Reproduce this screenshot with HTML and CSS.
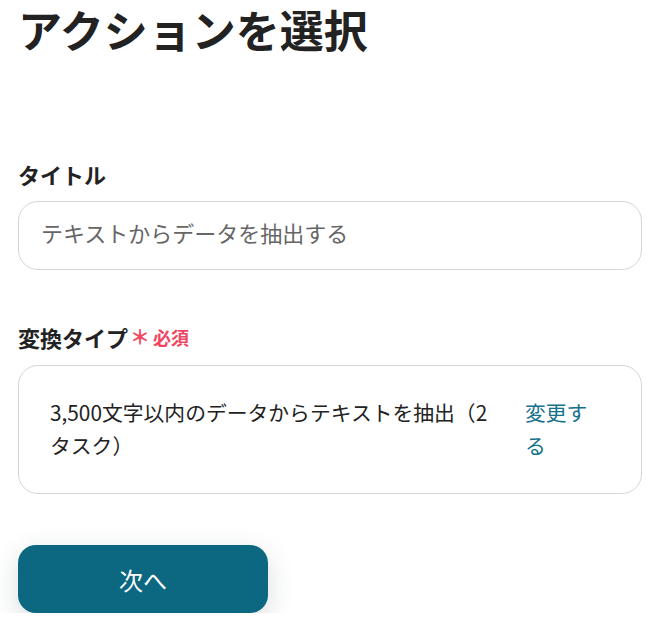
FILE: index.html
```html
<!DOCTYPE html>
<html lang="ja">
<head>
<meta charset="utf-8">
<link rel="stylesheet" href="styles.css">
</head>
<body>
<main class="page">
  <h1 class="title">アクションを選択</h1>
  <section class="field field-title">
    <label class="label">タイトル</label>
    <div class="input">テキストからデータを抽出する</div>
  </section>
  <section class="field field-type">
    <div class="label">変換タイプ<span class="req"><span class="ast">＊</span>必須</span></div>
    <div class="select">
      <div class="select-text">3,500文字以内のデータからテキストを抽出（2タスク）</div>
      <a class="change">変更する</a>
    </div>
  </section>
  <div class="actions">
    <button class="next">次へ</button>
  </div>
</main>
</body>
</html>
```

FILE: styles.css
```css
* { box-sizing: border-box; }
html, body { margin: 0; background: #fff; }
body {
  font-family: "Noto Sans CJK JP", "Noto Sans", sans-serif;
  color: #333;
}
.page {
  padding: 0 19px 0 18px;
}
.title {
  margin: 1px 0 0;
  font-size: 44px;
  line-height: 56px;
  font-weight: 700;
  color: #222;
}
.field-title { margin-top: 102px; }
.field-type { margin-top: 52px; }
.label {
  display: flex;
  align-items: center;
  font-size: 22px;
  line-height: 30px;
  font-weight: 700;
  color: #222;
  margin-bottom: 12px;
}
.field-type .label { margin-bottom: 13px; }
.req {
  display: inline-flex;
  align-items: center;
  margin-left: 2px;
  color: #f0465f;
  font-size: 18px;
  font-weight: 700;
}
.ast { font-size: 20px; margin-right: 3px; }
.input {
  height: 69px;
  border: 1px solid #d2d5da;
  border-radius: 20px;
  padding: 0 22px 7px;
  display: flex;
  align-items: center;
  font-size: 22px;
  color: #666;
}
.select {
  display: flex;
  align-items: flex-start;
  gap: 28px;
  border: 1px solid #d2d5da;
  border-radius: 20px;
  padding: 30px 52px 31px 31px;
  font-size: 20.8px;
  line-height: 33px;
}
.select-text { flex: 1; color: #222; }
.change {
  width: 64px;
  flex: none;
  color: #16718a;
}
.actions { margin-top: 51px; }
.next {
  width: 250px;
  height: 68px;
  border: none;
  border-radius: 18px;
  background: #0b6880;
  color: #fff;
  font-family: inherit;
  font-size: 24px;
  box-shadow: 0 8px 26px rgba(40, 60, 70, 0.18);
}
```
